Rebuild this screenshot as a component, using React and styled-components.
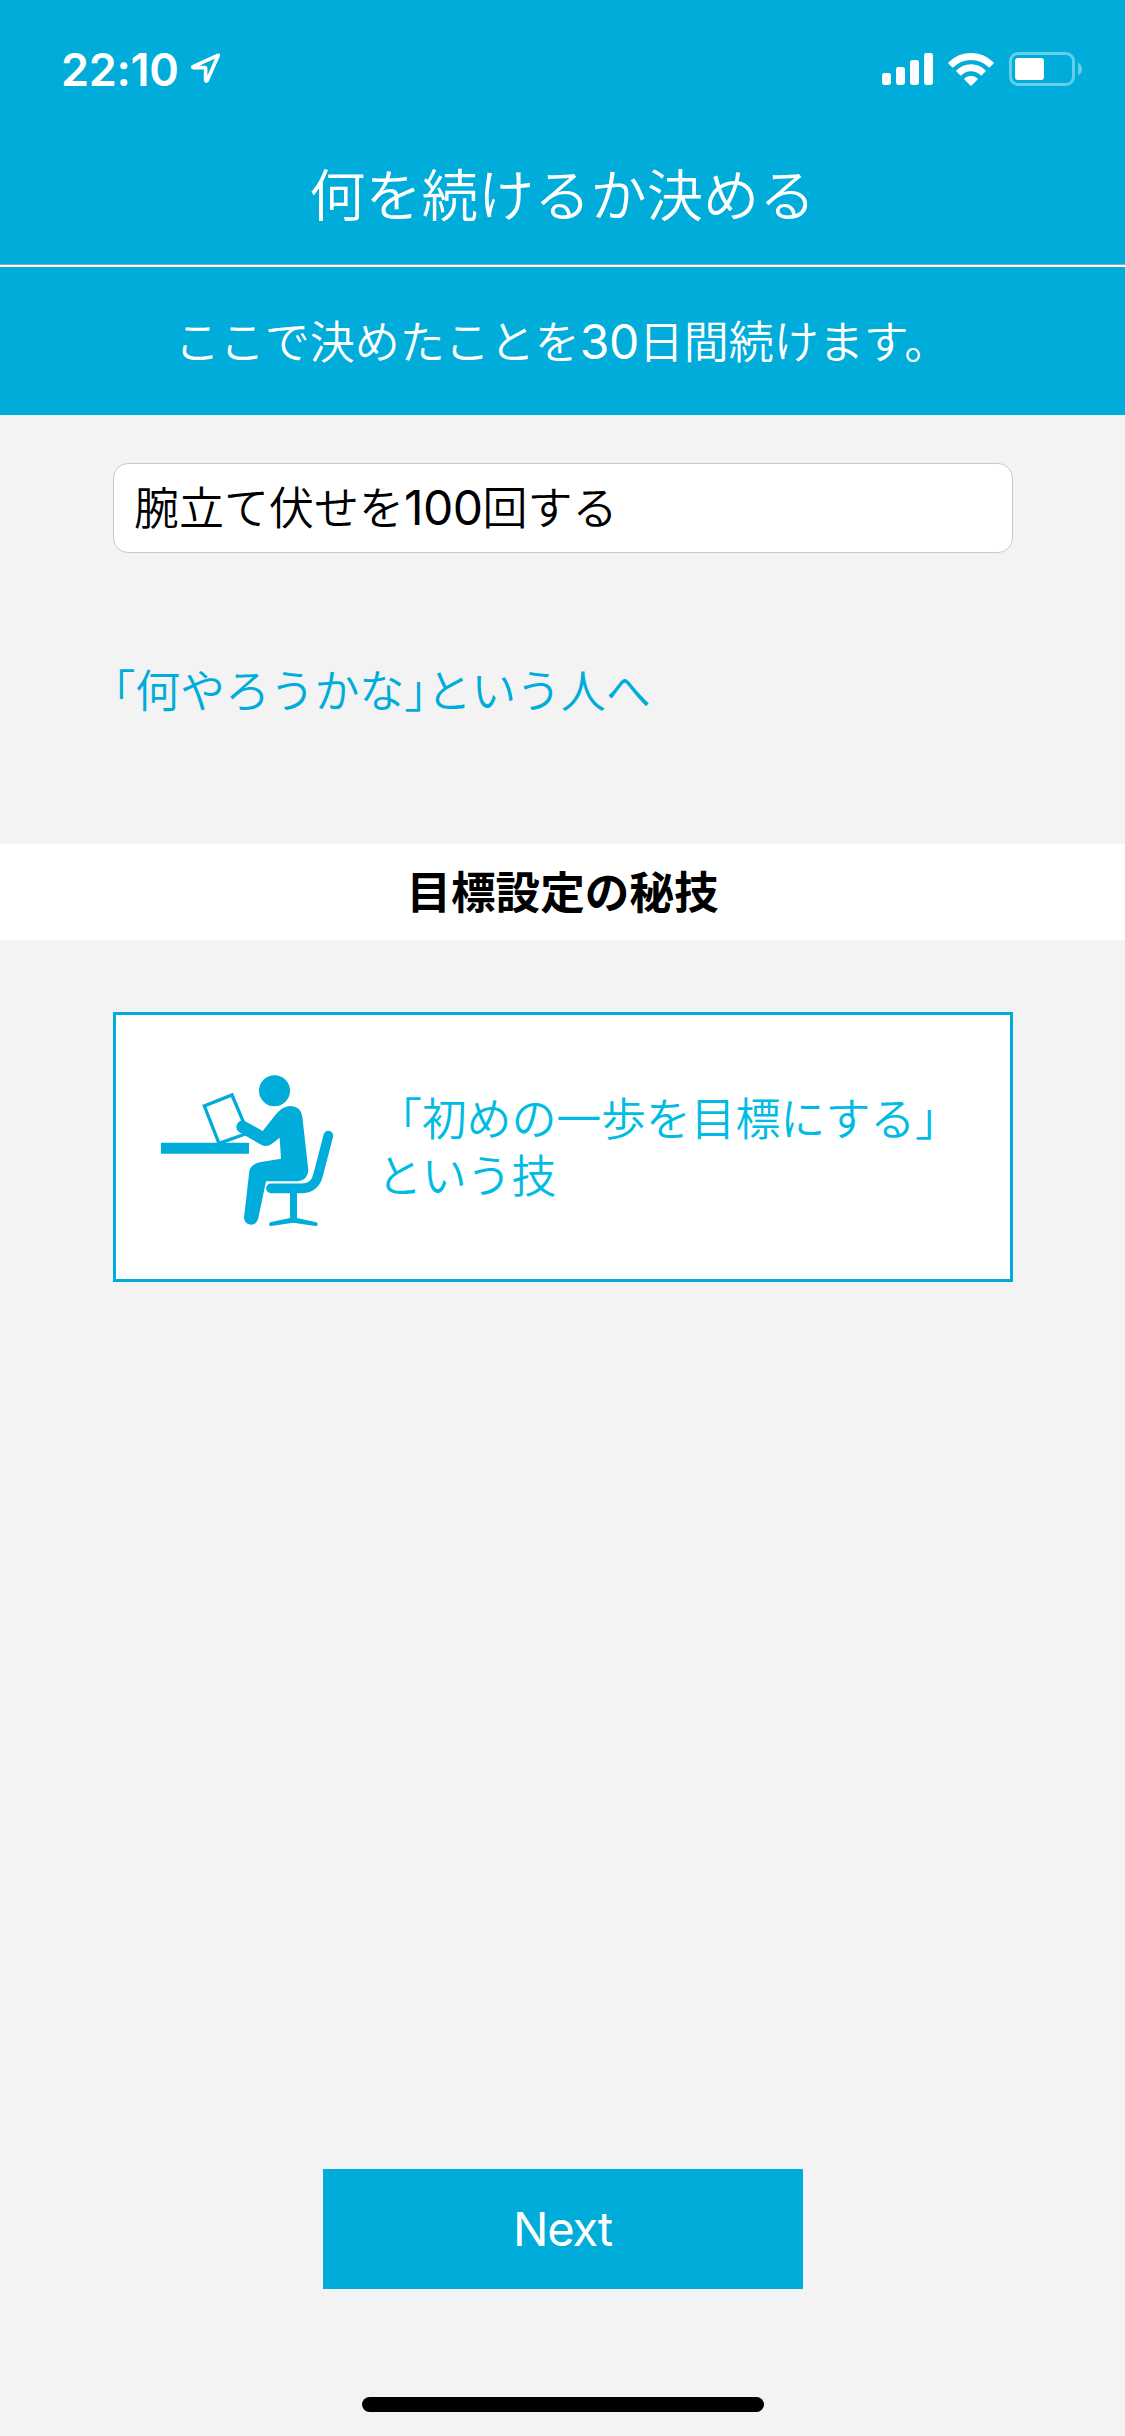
import React from 'react'
import styled, { createGlobalStyle, ThemeProvider } from 'styled-components'

const theme = {
  mainColor: '#00acda',
  accentColor: '#00bce4',
  pageBackgroundColor: '#f3f3f3',
  fieldBorderColor: '#c8c8c8',
  japanese: '"Noto Sans CJK JP", sans-serif',
  latin: 'Inter, "Noto Sans CJK JP", sans-serif'
}

const GlobalStyle = createGlobalStyle`
  body {
    margin: 0;
  }
  * {
    box-sizing: border-box;
  }
`

const Screen = styled.div`
  display: flex;
  flex-direction: column;
  width: 1125px;
  height: 2436px;
  overflow: hidden;
  background: ${props => props.theme.pageBackgroundColor};
  font-family: ${props => props.theme.japanese};
  font-size: 45px;
  font-weight: 350;
  line-height: 57px;
  white-space: nowrap;
`

const StatusBar = styled.div`
  display: flex;
  align-items: center;
  justify-content: space-between;
  flex-shrink: 0;
  height: 138px;
  padding: 0 43px 0 61px;
  background: ${props => props.theme.mainColor};
  color: #fff;
`

const StatusGroup = styled.div`
  display: flex;
  align-items: center;
  gap: ${props => props.gap};
`

const Clock = styled.span`
  font-family: ${props => props.theme.latin};
  font-size: 45px;
  font-weight: 600;
  letter-spacing: -0.3px;
`

const TitleBar = styled.header`
  display: flex;
  align-items: center;
  justify-content: center;
  flex-shrink: 0;
  height: 129px;
  padding-bottom: 20px;
  background: ${props => props.theme.mainColor};
  border-bottom: 2px solid #fff;
  box-shadow: inset 0 -1px 0 #8fa9b2;
  color: #fff;
`

const Title = styled.h1`
  margin: 0;
  font-size: 56.25px;
  font-weight: 350;
  line-height: 72px;
`

const Lead = styled.p`
  display: flex;
  align-items: center;
  justify-content: center;
  flex-shrink: 0;
  height: 148px;
  margin: 0;
  padding: 0 1px 4px 0;
  background: ${props => props.theme.mainColor};
  color: #fff;
`

// latin digits run a little larger than the kana around them
const Digits = styled.span`
  font-family: ${props => props.theme.latin};
  font-size: 48px;
  font-weight: 400;
  letter-spacing: -0.5px;
  line-height: 1;
`

const Content = styled.section`
  display: flex;
  flex-direction: column;
  align-items: flex-start;
  flex-shrink: 0;
  padding: 48px 112px 0 113px;
  height: 429px;
`

const GoalField = styled.div`
  display: flex;
  align-items: center;
  width: 900px;
  height: 90px;
  padding: 0 20px 6px;
  border: 1px solid ${props => props.theme.fieldBorderColor};
  border-radius: 15px;
  background: #fff;
  color: #000;
`

const HintLink = styled.a`
  margin-top: 107px;
  color: ${props => props.theme.mainColor};
  letter-spacing: -0.2px;
`

const HalfBracket = styled.span`
  font-feature-settings: 'halt';
`

const SectionHeading = styled.h2`
  display: flex;
  align-items: center;
  justify-content: center;
  flex-shrink: 0;
  height: 96px;
  margin: 0;
  padding-bottom: 5px;
  background: #fff;
  color: #000;
  font-size: 44.6px;
  font-weight: 700;
`

const TipCard = styled.div`
  display: flex;
  align-items: center;
  gap: 43px;
  flex-shrink: 0;
  width: 900px;
  height: 270px;
  margin: 72px 0 0 113px;
  padding-left: 44px;
  border: 3px solid ${props => props.theme.mainColor};
  background: #fff;
`

const TipFigure = styled.svg`
  flex-shrink: 0;
  width: 174px;
  height: 152px;
  margin-top: 8px;
  color: ${props => props.theme.mainColor};
`

const TipText = styled.span`
  padding-bottom: 4px;
  color: ${props => props.theme.accentColor};
  letter-spacing: -0.2px;
`

const Footer = styled.footer`
  display: flex;
  flex-direction: column;
  align-items: center;
  gap: 108px;
  margin-top: auto;
  padding-bottom: 24px;
`

const NextButton = styled.button`
  width: 480px;
  height: 120px;
  padding: 0 0 1px;
  border: 0;
  background: ${props => props.theme.mainColor};
  color: #fff;
  font-family: ${props => props.theme.latin};
  font-size: 47px;
  font-weight: 400;
  letter-spacing: -1.2px;
`

const HomeIndicator = styled.div`
  width: 402px;
  height: 15px;
  border-radius: 8px;
  background: #000;
`

const LocationIcon = () => (
  <svg width='30' height='32' viewBox='0 0 30 32' fill='none' stroke='#fff' strokeWidth='3.6' strokeLinejoin='round'>
    <path d='M27.3 2.2L2 13.6q-.6.9.4 1H13.600q1 0 1 1V27.200q.5 1.600 1.600.4Z' />
  </svg>
)

const SignalIcon = () => (
  <svg width='51' height='32' viewBox='0 0 51 32' fill='#fff'>
    <rect x='0' y='20' width='9' height='12' rx='2.400' />
    <rect x='14' y='14' width='9' height='18' rx='2.400' />
    <rect x='28' y='7' width='9' height='25' rx='2.400' />
    <rect x='42' y='0' width='9' height='32' rx='2.400' />
  </svg>
)

const WifiIcon = () => (
  <svg width='46' height='33' viewBox='0 0 46 33' fill='#fff'>
    <path d='M.6 9.300Q10 0 23 0T45.400 9.300q.7.7 0 1.400L41.800 14.200q-.6.6-1.300 0Q33 7 23 7T5.500 14.200q-.7.6-1.300 0L.6 10.700q-.7-.7 0-1.400Z' />
    <path d='M8.500 17.300Q14.500 11.300 23 11.300T37.500 17.300q.6.6 0 1.300L33.800 22.200q-.6.5-1.200 0Q28.500 18.300 23 18.300T13.400 22.200q-.6.5-1.200 0L8.500 18.600q-.6-.7 0-1.300Z' />
    <path d='M16.500 25.200Q19.300 22.700 23 22.700T29.500 25.200q.6.6 0 1.200L23.600 32.400q-.6.6-1.200 0L16.500 26.400q-.6-.6 0-1.200Z' />
  </svg>
)

const BatteryIcon = () => (
  <svg width='73' height='34' viewBox='0 0 73 34'>
    <rect x='1.500' y='1.500' width='63' height='31' rx='7.500' fill='none' stroke='#fff' strokeOpacity='.4' strokeWidth='3' />
    <rect x='6' y='6' width='29' height='22' rx='3' fill='#fff' />
    <path d='M69 10.500q4 2 4 6.500t-4 6.500Z' fill='#fff' fillOpacity='.4' />
  </svg>
)

// person reading at a desk
const DeskFigure = () => (
  <TipFigure viewBox='180 225 522 456' fill='currentColor'>
    <circle cx='523.500' cy='272.500' r='46.500' />
    <path d='M183 428H447V461H183Z' />
    <path d='M357 430L313 318L396 285L431 368M436 402L357 430' fill='none' stroke='currentColor' strokeWidth='10' />
    <path d='M488 393L529 341Q548 318 573 318Q603 320 607 350L625 510Q624 540 594 544H498L475 654Q470 674 453 674Q434 672 432 653L448 514Q451 493 479 487L543 476L539 413L514 433Q500 442 485 435L418 397Q408 390 409 379Q414 359 433 362Z' />
    <path d='M513 565H608C634 565 650 547 655 522L685 407' fill='none' stroke='currentColor' strokeWidth='29' strokeLinecap='round' strokeLinejoin='round' />
    <path d='M570 575H591V654L649 667Q654 669 653 674Q651 679 646 678L580 668L514 678Q507 679 507 672Q508 668 513 666L570 654Z' />
  </TipFigure>
)

const App = () => {
  return (
    <ThemeProvider theme={theme}>
      <GlobalStyle />
      <Screen>
        <StatusBar>
          <StatusGroup gap='12px'>
            <Clock>22:10</Clock>
            <LocationIcon />
          </StatusGroup>
          <StatusGroup gap='15px'>
            <SignalIcon />
            <WifiIcon />
            <BatteryIcon />
          </StatusGroup>
        </StatusBar>
        <TitleBar>
          <Title>何を続けるか決める</Title>
        </TitleBar>
        <Lead>
          <span>ここで決めたことを<Digits>30</Digits>日間続けます。</span>
        </Lead>
        <Content>
          <GoalField>
            <span>腕立て伏せを<Digits>100</Digits>回する</span>
          </GoalField>
          <HintLink>
            <HalfBracket>「</HalfBracket>何やろうかな<HalfBracket>」</HalfBracket>という人へ
          </HintLink>
        </Content>
        <SectionHeading>目標設定の秘技</SectionHeading>
        <TipCard>
          <DeskFigure />
          <TipText>「初めの一歩を目標にする」<br />という技</TipText>
        </TipCard>
        <Footer>
          <NextButton>Next</NextButton>
          <HomeIndicator />
        </Footer>
      </Screen>
    </ThemeProvider>
  )
}

export default App
